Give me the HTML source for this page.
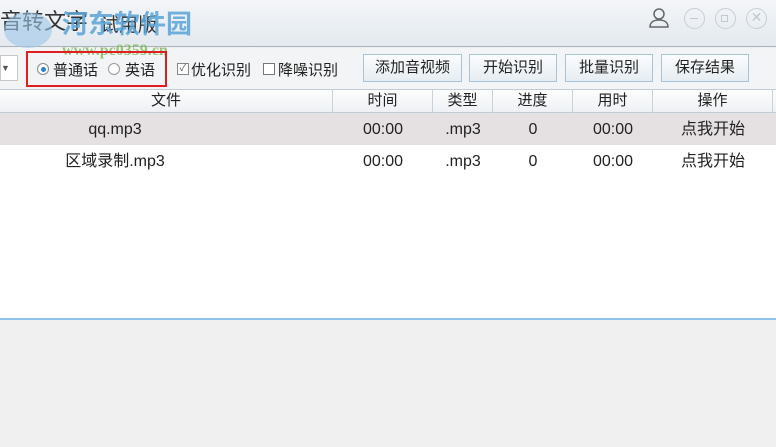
<!DOCTYPE html>
<html><head><meta charset="utf-8"><style>
*{margin:0;padding:0;box-sizing:border-box}
body{width:776px;height:447px;overflow:hidden;background:#f0f0f0;font-family:"Liberation Sans","Noto Sans CJK SC",sans-serif;position:relative;color:#222}
.a{position:absolute}
.title{left:0;top:0;width:776px;height:47px;background:linear-gradient(#f4f6f8,#e3e9ef);border-bottom:1px solid #a9b3bd}
.tb{left:0;top:48px;width:776px;height:41px;background:#f3f4f5}
.btn{top:54px;height:28px;border:1px solid #a9c3d9;background:linear-gradient(#fbfcfd,#e6edf2);font-size:15px;text-align:center;line-height:26px}
.hdr{left:0;top:89px;width:776px;height:24px;background:linear-gradient(#fdfdfd,#eef1f4);border-top:1px solid #c0ccd8;border-bottom:1px solid #c0ccd8;font-size:15px}
.hdr div,.row div{position:absolute;top:0;text-align:center}
.hdr div{border-right:1px solid #c6d3df;height:23px;line-height:22px}
.row{left:0;width:776px;height:32px;font-size:16px;line-height:34px}
.circ{width:21px;height:21px;border:1.5px solid #c7cfd7;border-radius:50%;top:8px}
</style></head><body>
<div class="a title"></div>
<div class="a" style="left:0;top:4px;font-size:22px;color:#333">音转文字</div>
<div class="a" style="left:100px;top:10px;font-size:19px;color:#333">试用版</div>
<div class="a" style="left:4px;top:12px;width:48px;height:36px;border-radius:50%;background:#9cc6e8;opacity:.6"></div>
<div class="a" style="left:62px;top:4px;font-size:26px;color:#5aa4d8;opacity:.85;font-weight:bold">河东软件园</div>
<svg class="a" style="left:648px;top:7px" width="22" height="22" viewBox="0 0 22 22"><circle cx="11" cy="7" r="5" fill="none" stroke="#666" stroke-width="1.5"/><path d="M2 20c0-5 4-7 9-7s9 2 9 7z" fill="none" stroke="#666" stroke-width="1.5"/></svg>
<div class="a circ" style="left:684px"><div class="a" style="left:5px;top:9px;width:8px;border-top:1.5px solid #c0c8d0"></div></div>
<div class="a circ" style="left:715px"><div class="a" style="left:5px;top:6px;width:7px;height:7px;border:1.5px solid #c0c8d0"></div></div>
<div class="a circ" style="left:746px;text-align:center;line-height:17px;color:#c0c8d0;font-size:14px">✕</div>
<div class="a tb"></div>
<div class="a" style="left:62px;top:42px;font-size:16px;color:#7bb85a;font-weight:bold;font-family:'Liberation Serif',serif;opacity:.8">www.pc0359.cn</div>
<div class="a" style="left:0;top:55px;width:18px;height:26px;border:1px solid #c8c8c8;background:#fff;font-size:9px;line-height:24px;color:#555">▼</div>
<div class="a" style="left:26px;top:51px;width:141px;height:36px;border:2px solid #e02020"></div>
<div class="a" style="left:37px;top:63px;width:12px;height:12px;border:1px solid #888;border-radius:50%;background:#fff"><div class="a" style="left:2.5px;top:2.5px;width:5px;height:5px;border-radius:50%;background:#2b7fd6"></div></div>
<div class="a" style="left:53px;top:59px;font-size:15px">普通话</div>
<div class="a" style="left:108px;top:63px;width:12px;height:12px;border:1px solid #999;border-radius:50%;background:#fff"></div>
<div class="a" style="left:125px;top:59px;font-size:15px">英语</div>
<div class="a" style="left:177px;top:63px;width:12px;height:12px;border:1px solid #888;background:#fff;font-size:10px;line-height:10px;color:#555;text-align:center">✓</div>
<div class="a" style="left:191px;top:59px;font-size:15px">优化识别</div>
<div class="a" style="left:263px;top:63px;width:12px;height:12px;border:1px solid #777;background:#fff"></div>
<div class="a" style="left:278px;top:59px;font-size:15px">降噪识别</div>
<div class="a btn" style="left:363px;width:99px">添加音视频</div>
<div class="a btn" style="left:469px;width:88px">开始识别</div>
<div class="a btn" style="left:565px;width:88px">批量识别</div>
<div class="a btn" style="left:661px;width:88px">保存结果</div>
<div class="a" style="left:0;top:89px;width:776px;height:231px;background:#fff;border-bottom:2px solid #90c0e8"></div>
<div class="a hdr"><div style="left:0;width:333px">文件</div><div style="left:333px;width:100px">时间</div><div style="left:433px;width:60px">类型</div><div style="left:493px;width:80px">进度</div><div style="left:573px;width:80px">用时</div><div style="left:653px;width:120px">操作</div></div>
<div class="a row" style="top:113px;background:#e5e0e2"><div style="left:0;width:230px">qq.mp3</div><div style="left:333px;width:100px">00:00</div><div style="left:433px;width:60px">.mp3</div><div style="left:493px;width:80px">0</div><div style="left:573px;width:80px">00:00</div><div style="left:653px;width:120px">点我开始</div></div>
<div class="a row" style="top:145px"><div style="left:0;width:230px">区域录制.mp3</div><div style="left:333px;width:100px">00:00</div><div style="left:433px;width:60px">.mp3</div><div style="left:493px;width:80px">0</div><div style="left:573px;width:80px">00:00</div><div style="left:653px;width:120px">点我开始</div></div>
</body></html>
